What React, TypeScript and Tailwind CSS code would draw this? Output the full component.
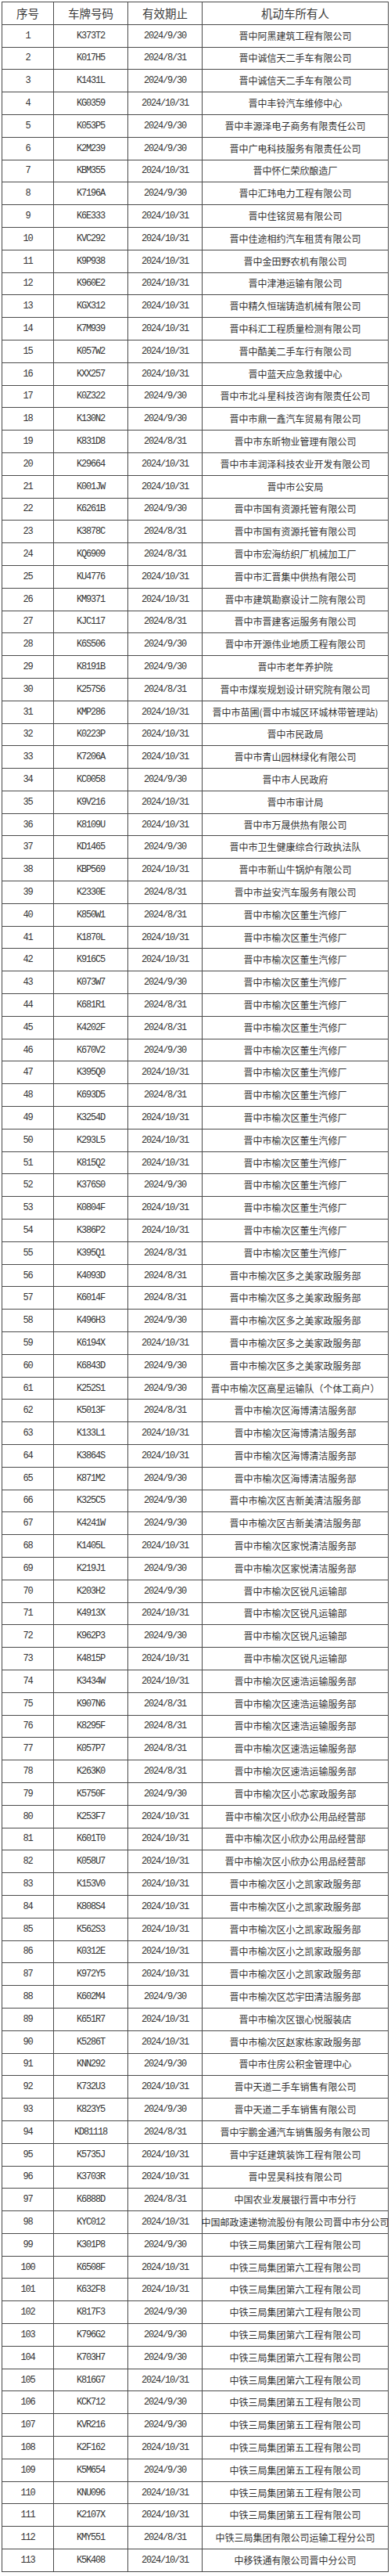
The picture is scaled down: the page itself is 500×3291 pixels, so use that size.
import React from "react";

const D1 = "2024/9/30";
const D2 = "2024/8/31";
const D3 = "2024/10/31";

const DONG = "晋中市榆次区董生汽修厂";
const DUO = "晋中市榆次区多之美家政服务部";
const HAI = "晋中市榆次区海博清洁服务部";
const JI = "晋中市榆次区吉新美清洁服务部";
const JIA = "晋中市榆次区家悦清洁服务部";
const RUI = "晋中市榆次区锐凡运输部";
const SU = "晋中市榆次区速浩运输服务部";
const XIN = "晋中市榆次区小欣办公用品经营部";
const KAI = "晋中市榆次区小之凯家政服务部";
const LIU = "中铁三局集团第六工程有限公司";
const WU = "中铁三局集团第五工程有限公司";

const rows: [string, string, string][] = [
  ["K373T2", D1, "晋中阿黑建筑工程有限公司"],
  ["K017H5", D2, "晋中诚信天二手车有限公司"],
  ["K1431L", D1, "晋中诚信天二手车有限公司"],
  ["KG0359", D3, "晋中丰铃汽车维修中心"],
  ["K053P5", D1, "晋中丰源泽电子商务有限责任公司"],
  ["K2M239", D1, "晋中广电科技服务有限责任公司"],
  ["KBM355", D3, "晋中怀仁荣欣酿造厂"],
  ["K7196A", D1, "晋中汇玮电力工程有限公司"],
  ["K6E333", D3, "晋中佳铭贸易有限公司"],
  ["KVC292", D3, "晋中佳途相约汽车租赁有限公司"],
  ["K9P938", D3, "晋中金田野农机有限公司"],
  ["K960E2", D3, "晋中津港运输有限公司"],
  ["KGX312", D3, "晋中精久恒瑞铸造机械有限公司"],
  ["K7M939", D3, "晋中科汇工程质量检测有限公司"],
  ["K057W2", D3, "晋中酷美二手车行有限公司"],
  ["KXX257", D3, "晋中蓝天应急救援中心"],
  ["K0Z322", D1, "晋中市北斗星科技咨询有限责任公司"],
  ["K130N2", D1, "晋中市鼎一鑫汽车贸易有限公司"],
  ["K831D8", D2, "晋中市东昕物业管理有限公司"],
  ["K29664", D3, "晋中市丰润泽科技农业开发有限公司"],
  ["K001JW", D3, "晋中市公安局"],
  ["K6261B", D1, "晋中市国有资源托管有限公司"],
  ["K3878C", D2, "晋中市国有资源托管有限公司"],
  ["KQ6909", D2, "晋中市宏海纺织厂机械加工厂"],
  ["KU4776", D3, "晋中市汇晋集中供热有限公司"],
  ["KM9371", D3, "晋中市建筑勘察设计二院有限公司"],
  ["KJC117", D2, "晋中市晋建客运服务有限公司"],
  ["K6S506", D1, "晋中市开源伟业地质工程有限公司"],
  ["K8191B", D1, "晋中市老年养护院"],
  ["K257S6", D2, "晋中市煤炭规划设计研究院有限公司"],
  ["KMP286", D3, "晋中市苗圃(晋中市城区环城林带管理站)"],
  ["K0223P", D3, "晋中市民政局"],
  ["K7206A", D3, "晋中市青山园林绿化有限公司"],
  ["KC0058", D1, "晋中市人民政府"],
  ["K9V216", D3, "晋中市审计局"],
  ["K8109U", D3, "晋中市万晟供热有限公司"],
  ["KD1465", D1, "晋中市卫生健康综合行政执法队"],
  ["KBP569", D3, "晋中市新山牛锅炉有限公司"],
  ["K2330E", D2, "晋中市益安汽车服务有限公司"],
  ["K850W1", D2, DONG],
  ["K1870L", D3, DONG],
  ["K916C5", D3, DONG],
  ["K073W7", D1, DONG],
  ["K681R1", D2, DONG],
  ["K4202F", D2, DONG],
  ["K670V2", D1, DONG],
  ["K395Q0", D3, DONG],
  ["K693D5", D2, DONG],
  ["K3254D", D3, DONG],
  ["K293L5", D3, DONG],
  ["K815Q2", D3, DONG],
  ["K376S0", D1, DONG],
  ["K0804F", D3, DONG],
  ["K386P2", D3, DONG],
  ["K395Q1", D2, DONG],
  ["K4093D", D2, DUO],
  ["K6014F", D2, DUO],
  ["K496H3", D1, DUO],
  ["K6194X", D3, DUO],
  ["K6843D", D1, DUO],
  ["K252S1", D1, "晋中市榆次区高星运输队（个体工商户）"],
  ["K5013F", D2, HAI],
  ["K133L1", D3, HAI],
  ["K3864S", D3, HAI],
  ["K871M2", D1, HAI],
  ["K325C5", D1, JI],
  ["K4241W", D1, JI],
  ["K1405L", D3, JIA],
  ["K219J1", D1, JIA],
  ["K203H2", D1, RUI],
  ["K4913X", D3, RUI],
  ["K962P3", D1, RUI],
  ["K4815P", D3, RUI],
  ["K3434W", D3, SU],
  ["K907N6", D2, SU],
  ["K8295F", D2, SU],
  ["K057P7", D2, SU],
  ["K263K0", D2, SU],
  ["K5750F", D1, "晋中市榆次区小芯家政服务部"],
  ["K253F7", D3, XIN],
  ["K601T0", D3, XIN],
  ["K058U7", D3, XIN],
  ["K153V0", D3, KAI],
  ["K808S4", D3, KAI],
  ["K562S3", D3, KAI],
  ["K0312E", D3, KAI],
  ["K972Y5", D3, KAI],
  ["K602M4", D1, "晋中市榆次区芯宇田清洁服务部"],
  ["K651R7", D3, "晋中市榆次区银心悦服装店"],
  ["K5286T", D3, "晋中市榆次区赵家栋家政服务部"],
  ["KNN292", D1, "晋中市住房公积金管理中心"],
  ["K732U3", D3, "晋中天道二手车销售有限公司"],
  ["K823Y5", D1, "晋中天道二手车销售有限公司"],
  ["KD81118", D2, "晋中宇鹏金通汽车销售服务有限公司"],
  ["K5735J", D3, "晋中宇廷建筑装饰工程有限公司"],
  ["K3703R", D3, "晋中昱昊科技有限公司"],
  ["K6888D", D2, "中国农业发展银行晋中市分行"],
  ["KYC012", D3, "中国邮政速递物流股份有限公司晋中市分公司"],
  ["K301P8", D1, LIU],
  ["K6508F", D3, LIU],
  ["K632F8", D3, LIU],
  ["K817F3", D1, LIU],
  ["K796G2", D1, LIU],
  ["K703H7", D1, LIU],
  ["K816G7", D3, LIU],
  ["KCK712", D1, WU],
  ["KVR216", D1, WU],
  ["K2F162", D3, WU],
  ["K5M654", D1, WU],
  ["KNU096", D3, WU],
  ["K2107X", D3, WU],
  ["KMY551", D2, "中铁三局集团有限公司运输工程分公司"],
  ["K5K408", D3, "中移铁通有限公司晋中分公司"],
];

const cell =
  "flex items-center justify-center border-r border-b border-[#4a4a4a] whitespace-nowrap";
const mono =
  "font-['Liberation_Mono','Noto_Sans_CJK_SC',monospace] text-[12px] tracking-[-1.2px]";
const cjk =
  "font-['Noto_Sans_CJK_SC','Noto_Sans_CJK_SC',sans-serif] text-[12px]";

export default function App() {
  return (
    <div className="w-[500px] bg-white pt-[2px] pl-[2px] text-[#333]">
      <div className="w-[495px] border-l border-t border-[#4a4a4a]">
        <div className="grid grid-cols-[66px_95px_95px_238px] h-[28.8px]">
          {["序号", "车牌号码", "有效期止", "机动车所有人"].map((h) => (
            <div
              key={h}
              className={`${cell} font-['Noto_Sans_CJK_SC',sans-serif] text-[14.5px] text-[#3a3a3a]`}
            >
              {h}
            </div>
          ))}
        </div>
        {rows.map((r, i) => (
          <div
            key={i}
            className="grid grid-cols-[66px_95px_95px_238px] h-[28.8px]"
          >
            <div className={`${cell} ${mono}`}>{i + 1}</div>
            <div className={`${cell} ${mono}`}>{r[0]}</div>
            <div className={`${cell} ${mono}`}>{r[1]}</div>
            <div className={`${cell} ${cjk} overflow-visible`}>
              <span className="shrink-0">{r[2]}</span>
            </div>
          </div>
        ))}
      </div>
    </div>
  );
}
